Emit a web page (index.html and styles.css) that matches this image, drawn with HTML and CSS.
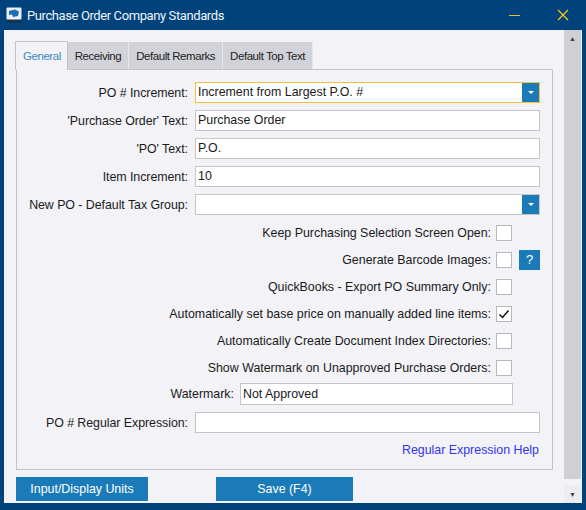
FILE: index.html
```html
<!DOCTYPE html>
<html lang="en">
<head>
    <meta charset="UTF-8">
    <title>Purchase Order Company Standards</title>
    <link rel="stylesheet" href="styles.css">
</head>
<body>
    <div class="window">
        <div class="titlebar">
            <svg class="app-icon" width="16" height="16" viewBox="0 0 16 16">
                <rect x="0.5" y="0.5" width="15" height="12" rx="1" fill="#e8f0f8"/>
                <path d="M3 4 L9 2.5 L13 4.5 L12 9 L7 10 L6 7.5 L3 8 Z" fill="#1d6fb0"/>
                <rect x="1" y="13.5" width="14" height="2" fill="#2a2a2a"/>
            </svg>
            <span class="title">Purchase Order Company Standards</span>
            <div class="controls">
                <div class="ctl"><span class="min-line"></span></div>
                <div class="ctl">
                    <svg width="12" height="12" viewBox="0 0 12 12">
                        <path d="M1 1 L11 11 M11 1 L1 11" stroke="#f2c318" stroke-width="1.4"/>
                    </svg>
                </div>
            </div>
        </div>

        <div class="client">
            <div class="content">
                <div class="tabs">
                    <div class="tab active">General</div>
                    <div class="tab">Receiving</div>
                    <div class="tab">Default Remarks</div>
                    <div class="tab">Default Top Text</div>
                </div>

                <div class="panel">
                    <div class="field-row">
                        <label>PO # Increment:</label>
                        <div class="input select focused">
                            <span>Increment from Largest P.O. #</span>
                            <span class="drop"></span>
                        </div>
                    </div>
                    <div class="field-row">
                        <label>'Purchase Order' Text:</label>
                        <div class="input">Purchase Order</div>
                    </div>
                    <div class="field-row">
                        <label>'PO' Text:</label>
                        <div class="input">P.O.</div>
                    </div>
                    <div class="field-row">
                        <label>Item Increment:</label>
                        <div class="input">10</div>
                    </div>
                    <div class="field-row">
                        <label>New PO - Default Tax Group:</label>
                        <div class="input select">
                            <span></span>
                            <span class="drop"></span>
                        </div>
                    </div>

                    <div class="checks">
                        <div class="check-row">
                            <label>Keep Purchasing Selection Screen Open:</label>
                            <span class="box"></span>
                            <span></span>
                        </div>
                        <div class="check-row">
                            <label>Generate Barcode Images:</label>
                            <span class="box"></span>
                            <span class="help">?</span>
                        </div>
                        <div class="check-row">
                            <label>QuickBooks - Export PO Summary Only:</label>
                            <span class="box"></span>
                            <span></span>
                        </div>
                        <div class="check-row">
                            <label>Automatically set base price on manually added line items:</label>
                            <span class="box">
                                <svg width="14" height="14" viewBox="0 0 14 14">
                                    <path d="M2.5 7.5 L5.5 10.5 L11.5 3.5" stroke="#111" stroke-width="1.5" fill="none"/>
                                </svg>
                            </span>
                            <span></span>
                        </div>
                        <div class="check-row">
                            <label>Automatically Create Document Index Directories:</label>
                            <span class="box"></span>
                            <span></span>
                        </div>
                        <div class="check-row">
                            <label>Show Watermark on Unapproved Purchase Orders:</label>
                            <span class="box"></span>
                            <span></span>
                        </div>
                    </div>

                    <div class="watermark-row">
                        <label>Watermark:</label>
                        <div class="input tall">Not Approved</div>
                    </div>
                    <div class="field-row">
                        <label>PO # Regular Expression:</label>
                        <div class="input"></div>
                    </div>
                    <div class="link-row">
                        <a href="#">Regular Expression Help</a>
                    </div>
                </div>

                <div class="actions">
                    <button class="btn wide">Input/Display Units</button>
                    <button class="btn save">Save (F4)</button>
                </div>
            </div>

            <div class="scrollbar">
                <div class="arrow up">&#9650;</div>
                <div class="thumb"></div>
                <div class="arrow down">&#9660;</div>
            </div>
        </div>
    </div>
</body>
</html>
```

FILE: styles.css
```css
:root {
    --title-blue: #00427b;
    --panel-bg: #f2f2f7;
    --tab-gray: #d2d2d9;
    --border: #c4c4c8;
    --accent: #1b7bb8;
    --text: #1a1a1a;
}

* {
    margin: 0;
    padding: 0;
    box-sizing: border-box;
}

body {
    width: 586px;
    height: 510px;
    overflow: hidden;
    background-color: var(--title-blue);
    font-family: 'Liberation Sans', Arial, sans-serif;
    font-size: 12.4px;
    color: var(--text);
}

.window {
    display: flex;
    flex-direction: column;
    height: 510px;
}

/* title bar */
.titlebar {
    height: 30px;
    display: flex;
    align-items: center;
    color: #eef3f8;
}

.app-icon {
    margin-left: 6px;
    margin-right: 5px;
}

.title {
    font-family: Roboto, 'Noto Sans', sans-serif;
    font-size: 13px;
    letter-spacing: -0.4px;
}

.controls {
    margin-left: auto;
    display: flex;
    gap: 3px;
    height: 30px;
}

.ctl {
    width: 46px;
    display: flex;
    align-items: center;
    justify-content: center;
}

.min-line {
    width: 11px;
    height: 1px;
    background-color: #e2c23a;
}

/* client area */
.client {
    flex: 1;
    display: flex;
    margin: 0 4px 7px 4px;
    background-color: var(--panel-bg);
}

.content {
    flex: 1;
    padding: 11px 11px 0 12px;
}

.tabs {
    display: flex;
    align-items: flex-end;
    height: 28px;
}

.tab {
    height: 27px;
    padding: 0 7px;
    display: flex;
    align-items: center;
    background-color: var(--tab-gray);
    border-right: 1px solid #e6e6ec;
    font-size: 11.5px;
    letter-spacing: -0.45px;
    color: #222;
}

.tab.active {
    height: 29px;
    margin-bottom: -1px;
    margin-left: -1px;
    padding: 0 6px 0 7px;
    background-color: var(--panel-bg);
    border: 1px solid var(--border);
    border-bottom: none;
    color: #3d8bc6;
    position: relative;
    z-index: 1;
}

.panel {
    height: 401px;
    border: 1px solid var(--border);
    padding: 12px 12px 0 0;
}

/* form rows */
.field-row {
    display: flex;
    align-items: center;
    margin-bottom: 7px;
}

.field-row label {
    width: 178px;
    padding-right: 7px;
    text-align: right;
    letter-spacing: -0.05px;
}

.input {
    flex: 1;
    height: 21px;
    background-color: white;
    border: 1px solid #c6c6c6;
    padding: 0 2px;
    display: flex;
    align-items: center;
    line-height: 1;
}

.input.tall {
    height: 22px;
}

.select {
    justify-content: space-between;
    padding-right: 0;
}

.select.focused {
    border-color: #f3c236;
}

.drop {
    width: 17px;
    height: 19px;
    background-color: var(--accent);
    position: relative;
}

.drop::after {
    content: '';
    position: absolute;
    left: 6px;
    top: 8px;
    border-left: 3px solid transparent;
    border-right: 3px solid transparent;
    border-top: 3px solid white;
}

/* check rows */
.checks {
    margin-top: -3px;
}

.check-row {
    display: grid;
    grid-template-columns: 1fr 16px 28px;
    align-items: center;
    height: 27px;
}

.check-row label {
    text-align: right;
    padding-right: 5px;
}

.box {
    width: 16px;
    height: 16px;
    background-color: white;
    border: 1px solid #b8b8bc;
    display: flex;
    align-items: center;
    justify-content: center;
}

.help {
    margin-left: 7px;
    width: 21px;
    height: 20px;
    background-color: var(--accent);
    color: white;
    font-size: 13px;
    display: flex;
    align-items: center;
    justify-content: center;
}

.watermark-row {
    display: flex;
    align-items: center;
    margin: 2px 27px 7px 0;
}

.watermark-row label {
    width: 223px;
    padding-right: 6px;
    text-align: right;
}

.link-row {
    text-align: right;
    margin-top: 10px;
    padding-right: 1px;
}

.link-row a {
    color: #3434f2;
    text-decoration: none;
}

/* bottom buttons */
.actions {
    display: flex;
    margin-top: 7px;
}

.btn {
    height: 24px;
    border: none;
    background-color: var(--accent);
    color: white;
    font-family: 'Liberation Sans', Arial, sans-serif;
    font-size: 12.4px;
}

.btn.wide {
    width: 132px;
}

.btn.save {
    width: 137px;
    margin-left: 68px;
}

/* scrollbar */
.scrollbar {
    width: 17px;
    margin-right: 1px;
    display: flex;
    flex-direction: column;
    background-color: #cfcfd5;
}

.arrow {
    height: 17px;
    font-size: 7px;
    color: #444;
    display: flex;
    align-items: center;
    justify-content: center;
}

.thumb {
    flex: 1;
    border-bottom: 6px solid var(--panel-bg);
}

.arrow.down {
    background-color: #ececf1;
    height: 18px;
}
```
